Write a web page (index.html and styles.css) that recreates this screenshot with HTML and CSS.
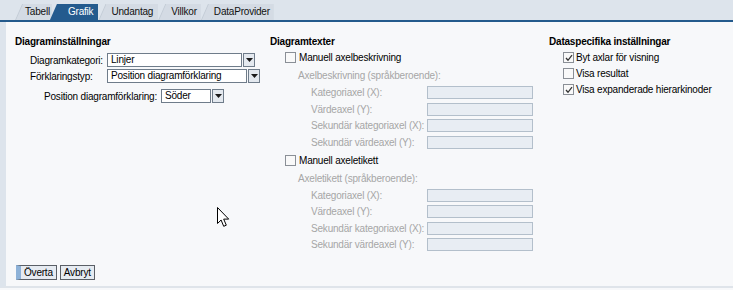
FILE: index.html
```html
<!DOCTYPE html>
<html lang="sv">
<head>
<meta charset="utf-8">
<title>Grafik</title>
<link rel="stylesheet" href="styles.css">
</head>
<body>
<div class="page">
  <div class="tabbar">
    <div class="tab tab-first">Tabell</div>
    <div class="tab active">Grafik</div>
    <div class="tab">Undantag</div>
    <div class="tab">Villkor</div>
    <div class="tab">DataProvider</div>
  </div>
  <div class="main">
    <div class="columns">
      <div class="col col1">
        <div class="heading">Diagraminställningar</div>
        <div class="frow r1">
          <span class="flabel">Diagramkategori:</span>
          <span class="select w1"><span class="sval">Linjer</span><span class="sbtn"><svg width="7" height="4" viewBox="0 0 7 4"><path d="M0 0h7L3.5 4z" fill="#1a1a1a"/></svg></span></span>
        </div>
        <div class="frow r2">
          <span class="flabel">Förklaringstyp:</span>
          <span class="select w2"><span class="sval">Position diagramförklaring</span><span class="sbtn"><svg width="7" height="4" viewBox="0 0 7 4"><path d="M0 0h7L3.5 4z" fill="#1a1a1a"/></svg></span></span>
        </div>
        <div class="frow r3">
          <span class="flabel l3">Position diagramförklaring:</span>
          <span class="select w3"><span class="sval">Söder</span><span class="sbtn"><svg width="7" height="4" viewBox="0 0 7 4"><path d="M0 0h7L3.5 4z" fill="#1a1a1a"/></svg></span></span>
        </div>
      </div>
      <div class="col col2">
        <div class="heading">Diagramtexter</div>
        <div class="check c-first"><span class="box"></span><span>Manuell axelbeskrivning</span></div>
        <div class="subhead">Axelbeskrivning (språkberoende):</div>
        <div class="irow"><span class="ilabel">Kategoriaxel (X):</span><span class="input"></span></div>
        <div class="irow"><span class="ilabel">Värdeaxel (Y):</span><span class="input"></span></div>
        <div class="irow"><span class="ilabel">Sekundär kategoriaxel (X):</span><span class="input"></span></div>
        <div class="irow"><span class="ilabel">Sekundär värdeaxel (Y):</span><span class="input"></span></div>
        <div class="check c-second"><span class="box"></span><span>Manuell axeletikett</span></div>
        <div class="subhead">Axeletikett (språkberoende):</div>
        <div class="irow"><span class="ilabel">Kategoriaxel (X):</span><span class="input"></span></div>
        <div class="irow"><span class="ilabel">Värdeaxel (Y):</span><span class="input"></span></div>
        <div class="irow"><span class="ilabel">Sekundär kategoriaxel (X):</span><span class="input"></span></div>
        <div class="irow"><span class="ilabel">Sekundär värdeaxel (Y):</span><span class="input"></span></div>
      </div>
      <div class="col col3">
        <div class="heading">Dataspecifika inställningar</div>
        <div class="check c-first"><span class="box"><svg width="8" height="8" viewBox="0 0 8 8"><path d="M1 4l2 2.3L7 1.2" fill="none" stroke="#333" stroke-width="1.3"/></svg></span><span>Byt axlar för visning</span></div>
        <div class="check c-list"><span class="box"></span><span>Visa resultat</span></div>
        <div class="check c-list"><span class="box"><svg width="8" height="8" viewBox="0 0 8 8"><path d="M1 4l2 2.3L7 1.2" fill="none" stroke="#333" stroke-width="1.3"/></svg></span><span>Visa expanderade hierarkinoder</span></div>
      </div>
    </div>
    <div class="buttons">
      <span class="btn primary">Överta</span>
      <span class="btn">Avbryt</span>
    </div>
  </div>
  <svg class="cursor" width="13" height="21" viewBox="0 0 13 21"><path d="M0.5 0.5v16l3.6-3.5 2.6 6.3 2.6-1.1-2.6-6.1h5z" fill="#fff" stroke="#000" stroke-width="1" stroke-linejoin="miter"/></svg>
</div>
</body>
</html>
```
FILE: styles.css
```css
* { box-sizing: border-box; }
html, body { margin: 0; padding: 0; }
body {
  font-family: "Liberation Sans", Arial, sans-serif;
  font-size: 10px;
  letter-spacing: -0.2px;
  color: #000;
  background: #f7f8fa;
}
.page {
  position: relative;
  width: 733px;
  height: 290px;
  overflow: hidden;
}
.tabbar {
  height: 22px;
  background: #dde4ec;
  border-bottom: 2px solid #245a8c;
  display: flex;
  align-items: flex-end;
  padding-left: 15px;
}
.tab {
  height: 16px;
  line-height: 16px;
  background: #d4dbe4;
  color: #111;
  padding: 0 4px 0 13px;
  clip-path: polygon(7px 0, 100% 0, 100% 100%, 0 100%);
  position: relative;
  white-space: nowrap;
}
.tab::before {
  content: "";
  position: absolute;
  left: 0; top: 0; bottom: 0;
  width: 8px;
  background: #c3ccd6;
  clip-path: polygon(7px 0, 8px 0, 1px 100%, 0 100%);
}
.tab-first { padding: 0 2px 0 10px; }
.tab.active {
  background: #245b8e;
  color: #fff;
  padding: 0 5px 0 18px;
  margin-left: -2px;
}
.tab.active + .tab { padding-right: 5px; }
.tab.active::before { display: none; }
.main {
  height: 266px;
  border-left: 6px solid #dde4ec;
  border-bottom: 2px solid #dfe4ea;
  display: flex;
  flex-direction: column;
  padding: 13px 0 6px 9px;
}
.columns {
  display: grid;
  grid-template-columns: 255px 279px 1fr;
}
.col { display: flex; flex-direction: column; white-space: nowrap; }
.heading {
  font-weight: bold;
  line-height: 13px;
  height: 13px;
}
.frow {
  display: flex;
  align-items: center;
  height: 14px;
  padding-left: 15px;
}
.r1 { margin-top: 5px; }
.r2 { margin-top: 2px; }
.r3 { margin-top: 6px; padding-left: 29px; }
.flabel { width: 77px; }
.l3 { width: 117px; }
.select {
  display: flex;
  height: 14px;
  gap: 1px;
}
.sval {
  background: #fff;
  border: 1px solid #6f7c8a;
  line-height: 12px;
  padding-left: 3px;
}
.w1 .sval { width: 135px; }
.w2 .sval { width: 140px; }
.w3 .sval { width: 50px; }
.sbtn {
  width: 12px;
  height: 14px;
  background: #e4e9ef;
  border: 1px solid #6f7c8a;
  display: flex;
  align-items: center;
  justify-content: center;
}
.check {
  display: flex;
  align-items: center;
  height: 13px;
  padding-left: 15px;
  gap: 3px;
}
.col3 .check { padding-left: 14px; gap: 2px; }
.c-first { margin-top: 3px; }
.c-second { margin-top: 5px; }
.c-list { margin-top: 3px; }
.box {
  width: 11px;
  height: 11px;
  border: 1px solid #8a8f96;
  background: #f9f9f9;
  display: flex;
  align-items: center;
  justify-content: center;
}
.subhead {
  color: #a6a6a6;
  padding-left: 28px;
  height: 13px;
  line-height: 13px;
  margin-top: 5px;
}
.irow {
  display: flex;
  align-items: center;
  height: 13px;
  margin-top: 3.5px;
  padding-left: 41px;
  color: #a6a6a6;
}
.subhead + .irow { margin-top: 4px; }
.ilabel { width: 116px; }
.input {
  width: 106px;
  height: 13px;
  background: #e8edf3;
  border: 1px solid #b3bfcb;
}
.buttons {
  margin-top: auto;
  display: flex;
  gap: 3px;
  padding-left: 1px;
}
.btn {
  height: 15px;
  line-height: 13px;
  border: 1px solid #5a5f66;
  background: #e6ebf1;
  padding: 0 3px;
}
.btn.primary {
  border-left: 5px solid #8eb2d8;
  padding-left: 3px;
}
.cursor {
  position: absolute;
  left: 217px;
  top: 207px;
}
```
